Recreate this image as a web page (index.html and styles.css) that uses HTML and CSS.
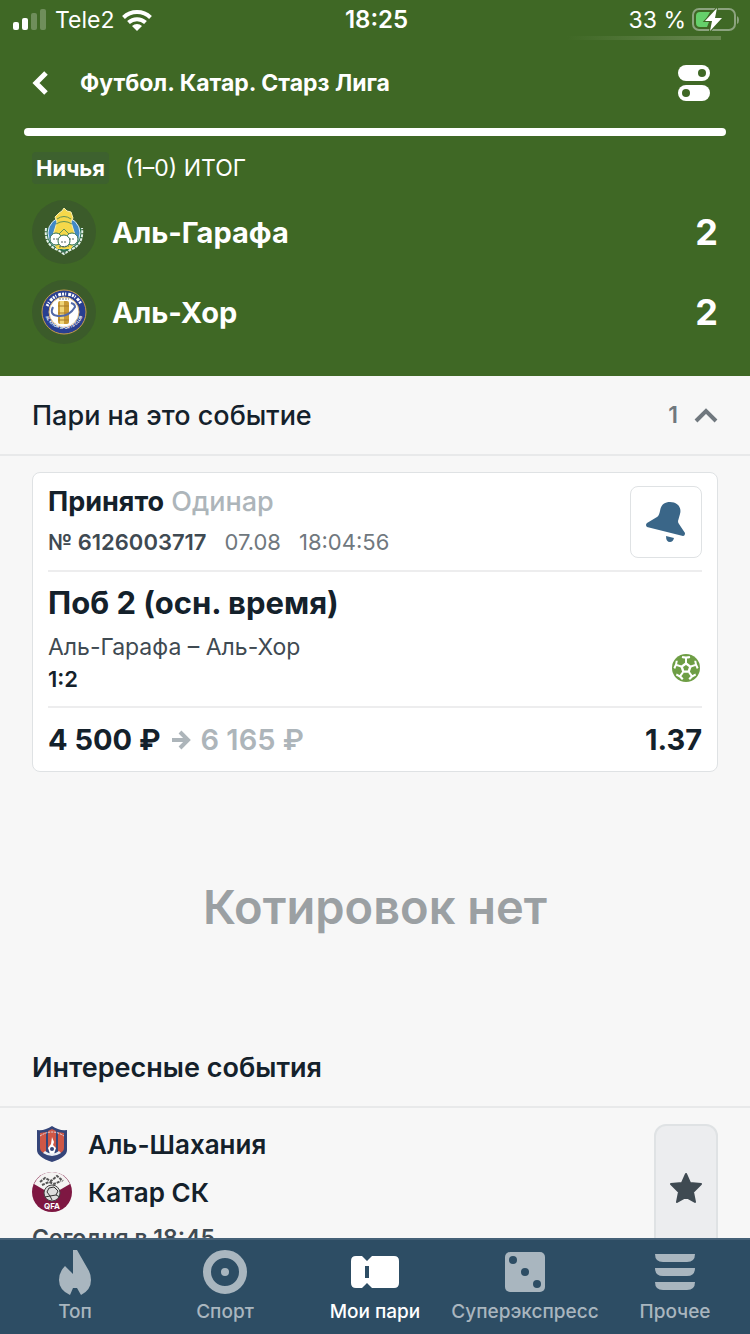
FILE: index.html
```html
<!DOCTYPE html>
<html lang="ru">
<head>
  <meta charset="UTF-8" />
  <meta name="viewport" content="width=device-width, initial-scale=1.0" />
  <title>Футбол. Катар. Старз Лига</title>
  <link rel="stylesheet" href="styles.css">
</head>
<body>

  <header class="match">
    <div class="status">
      <div class="status-left">
        <svg width="34" height="22" viewBox="0 0 34 22" fill="#fff">
          <rect x="0" y="13" width="6" height="8" rx="2" />
          <rect x="9" y="9" width="6" height="12" rx="2" />
          <rect x="18" y="4" width="6" height="17" rx="2" opacity=".25" />
          <rect x="27" y="0" width="6" height="21" rx="2" opacity=".25" />
        </svg>
        <span>Tele2</span>
        <svg width="30" height="22" viewBox="0 0 30 22" fill="none" stroke="#fff" stroke-width="4">
          <path d="M1.500 8.500a19.500 19.500 0 0 1 27 0" />
          <path d="M6.500 13.500a12.500 12.500 0 0 1 17 0" />
          <path d="M15 22l-5-5a7.500 7.500 0 0 1 10 0z" fill="#fff" stroke="none" />
        </svg>
      </div>
      <time class="clock">18:25</time>
      <div class="status-right">
        <span>33 %</span>
        <svg width="48" height="24" viewBox="0 0 48 24">
          <rect x="1" y="1" width="42" height="21" rx="6" fill="none" stroke="#8ca37f" stroke-width="2" />
          <path d="M45 8q2 1 2 4t-2 4z" fill="#8ca37f" />
          <path d="M8 4h10l-5 9 4 1-2 5H8q-4 0-4-4V8q0-4 4-4z" fill="#65d06a" />
          <path d="M25 0L13 13h7l-2 10L30 10h-7z" fill="#fff" stroke="#3f6825" stroke-width="2" paint-order="stroke" />
        </svg>
      </div>
      <div class="glow"></div>
    </div>

    <div class="titlebar">
      <button class="icon-btn back" aria-label="Назад">
        <svg width="18" height="24" viewBox="0 0 18 24" fill="none" stroke="#fff" stroke-width="5"><path d="M14 2L4 12l10 10" /></svg>
      </button>
      <h1>Футбол. Катар. Старз Лига</h1>
      <button class="icon-btn" aria-label="Настройки">
        <svg width="32" height="36" viewBox="0 0 32 36">
          <rect width="32" height="16" rx="8" fill="#fff" />
          <rect y="20" width="32" height="16" rx="8" fill="#fff" />
          <circle cx="24" cy="8" r="4" fill="#3f6825" />
          <circle cx="8" cy="28" r="4" fill="#3f6825" />
        </svg>
      </button>
    </div>
    <div class="progress"></div>

    <div class="result">
      <span class="tag">Ничья</span>
      <span>(1–0) ИТОГ</span>
    </div>

    <div class="team">
      <div class="logo">
        <svg width="40" height="48" viewBox="0 0 40 48">
          <path d="M2 20q-2 17 12 22l6 4 6-4q14-5 12-22" fill="#2f7350" stroke="#e4f1e9" stroke-width="2" stroke-dasharray="3 1" />
          <circle cx="20" cy="25" r="16" fill="#4189c7" stroke="#dcecf4" />
          <path d="M15 5l3-2 2-3 3 3 4 1 2 6-2 4 4 13-4 8H13l-4-8 4-13-2-5z" fill="#f5d84a" stroke="#f8eeb0" />
          <path d="M13 11q7-5 14 0M12 16q8-5 16 0M15 26l5-5 5 5" fill="none" stroke="#629254" />
          <path d="M9 34q11 7 22 0l-4 7H13z" fill="#f5d84a" />
          <g fill="#fff" stroke="#357353">
            <circle cx="12" cy="31" r="6" /><circle cx="28" cy="31" r="6" /><circle cx="20" cy="33" r="6" />
          </g>
          <path d="M9 31h6M17 34h6M25 31h6M15 39l10-1M17 44h6" stroke="#55655c" stroke-dasharray="2 1" />
        </svg>
      </div>
      <h2>Аль-Гарафа</h2>
      <b>2</b>
    </div>
    <div class="team">
      <div class="logo">
        <svg width="46" height="46" viewBox="0 0 46 46">
          <defs><path id="ring" d="M3 20a20 20 0 0 0 40 0" /></defs>
          <circle cx="23" cy="23" r="22" fill="#293f91" stroke="#c79c4e" />
          <circle cx="23" cy="23" r="15" fill="#fff" stroke="#d8b475" />
          <path d="M6 17q6-12 18-12 11 0 16 10" fill="none" stroke="#fff" stroke-width="3" stroke-dasharray="2 1 1 2 3 1" />
          <text class="crest-text"><textPath href="#ring" startOffset="50%">AL KHOR SPORTS CLUB</textPath></text>
          <rect x="17" y="12" width="11" height="23" rx="2" fill="#c99a34" />
          <rect x="19" y="12" width="4" height="23" fill="#f0d477" />
          <path d="M17 17h11M17 24h11M17 31h11" stroke="#a87b28" />
          <path d="M12 18q-4 8 5 9 11 1 17-9 0-3-4-4" fill="none" stroke="#5269a8" stroke-width="2" />
          <path d="M18 10h10" stroke="#777" stroke-dasharray="2 1" />
        </svg>
      </div>
      <h2>Аль-Хор</h2>
      <b>2</b>
    </div>
  </header>

  <main>
    <section>
      <button class="section-head" aria-expanded="true">
        <span class="section-title">Пари на это событие</span>
        <span class="count">1</span>
        <svg width="24" height="16" viewBox="0 0 24 16" fill="none" stroke="#70787e" stroke-width="4"><path d="M2 14L12 4l10 10" /></svg>
      </button>

      <article class="bet">
        <div class="bet-head">
          <div>
            <p class="bet-status"><b>Принято</b> Одинар</p>
            <p class="bet-info"><b>№ 6126003717</b><span>07.08</span><span>18:04:56</span></p>
          </div>
          <button class="bell" aria-label="Уведомления">
            <svg width="70" height="70" viewBox="1 1 70 70" fill="#3a6688">
              <path d="M17 37l10-6q2-1 3-6c1-7 5-9 10-9 7 0 12 5 10 12l-2 7q0 2 1 3l6 9q0 3-2 3L17 41q-2-2 0-4z" />
              <path d="M36 50l8 2q-1 4-4 4-4 0-4-6z" />
            </svg>
          </button>
        </div>
        <div class="bet-body">
          <div>
            <h3>Поб 2 (осн. время)</h3>
            <p class="bet-teams">Аль-Гарафа – Аль-Хор</p>
            <p class="bet-score">1:2</p>
          </div>
          <svg class="ball" width="30" height="30" viewBox="0 0 30 30">
            <circle cx="15" cy="15" r="14" fill="#6e9e45" />
            <g fill="none" stroke="#fff" stroke-width="2">
              <path id="seam" d="M15 10V4M11 4q4 1 8 0" />
              <use href="#seam" transform="rotate(72 15 15)" />
              <use href="#seam" transform="rotate(144 15 15)" />
              <use href="#seam" transform="rotate(216 15 15)" />
              <use href="#seam" transform="rotate(288 15 15)" />
              <path d="M15 10.500l4.300 3.100-1.600 5h-5.400l-1.600-5z" stroke-width="2.400" />
            </g>
          </svg>
        </div>
        <div class="bet-foot">
          <p><b>4 500 ₽</b>
            <svg width="20" height="20" viewBox="0 0 20 20" fill="none" stroke="#adb5ba" stroke-width="4"><path d="M1 10h15M9 2l8 8-8 8" /></svg>
            6 165 ₽</p>
          <b>1.37</b>
        </div>
      </article>
    </section>

    <p class="empty">Котировок нет</p>

    <section>
      <h2 class="interesting">Интересные события</h2>
      <div class="event">
        <div class="event-info">
          <div class="event-team">
            <svg width="40" height="40" viewBox="0 0 40 40">
              <path d="M5 6q8 1 15-4 7 5 15 4v20q0 7-15 12Q5 33 5 26z" fill="#354579" />
              <path d="M8 9l6-1v22q-6-2-6-6zM26 8l6 1v15q0 4-6 6zM16 7l4-2 4 2v18h-8z" fill="#ce5746" />
              <path d="M8 12q12-8 24 0" fill="none" stroke="#dfe0e9" stroke-dasharray="2 1" />
              <path d="M20 13l2 5-1 3 3 3-2 6h-4l-2-6 3-4z" fill="#fff" />
              <circle cx="20" cy="25" r="2" fill="#354579" />
              <path d="M13 27q7 5 14 0l2 2q-9 6-18 0z" fill="#e9edf3" />
            </svg>
            <h3>Аль-Шахания</h3>
          </div>
          <div class="event-team">
            <svg width="40" height="40" viewBox="0 0 40 40">
              <circle cx="20" cy="20" r="20" fill="#7e1742" />
              <path d="M2 12Q8 0 20 0t18 12l-12 7H14z" fill="#f4f3f2" />
              <path d="M8 10l5-4 6 3 6-5 6 5M10 13l7-3 5 2 7-3" fill="none" stroke="#555" stroke-width="2" stroke-dasharray="3 1" />
              <circle cx="20" cy="21" r="8" fill="#ddd" stroke="#444" />
              <path d="M17 16l5-1 4 4-2 4-6 1-3-4zM13 25l5-1 2 4M24 23l4 2" fill="none" stroke="#333" stroke-width="1" />
              <text x="20" y="37" class="qfa">QFA</text>
            </svg>
            <h3>Катар СК</h3>
          </div>
          <p class="event-time">Сегодня в 18:45</p>
        </div>
        <button class="fav" aria-label="В избранное">
          <svg width="34" height="34" viewBox="0 0 34 34"><path d="M17 3l4 9 11 1-8 8 2 10-9-5-9 5 2-10-8-8 11-1z" fill="#3f4a52" stroke="#3f4a52" stroke-width="2" stroke-linejoin="round" /></svg>
        </button>
      </div>
    </section>
  </main>

  <nav class="tabs">
    <a href="#">
      <svg width="48" height="48" viewBox="0 0 48 48" fill="currentColor"><path d="M22 2h4l12 21q2 4 2 9 0 10-10 15l-4-7h-4l-3 7Q8 42 8 32q0-8 6-14l8 8z" /></svg>
      <span>Топ</span>
    </a>
    <a href="#">
      <svg width="48" height="48" viewBox="0 0 48 48"><circle cx="24" cy="24" r="18" fill="none" stroke="currentColor" stroke-width="8" /><circle cx="24" cy="24" r="4" fill="currentColor" /></svg>
      <span>Спорт</span>
    </a>
    <a href="#" class="active">
      <svg width="48" height="48" viewBox="0 0 48 48" fill="currentColor"><path fill-rule="evenodd" d="M5 8h6l5 5 5-5h22q5 0 5 5v22q0 5-5 5H21l-5-5-5 5H5q-5 0-5-5V13q0-5 5-5zM14 18v12h4V18z" /></svg>
      <span>Мои пари</span>
    </a>
    <a href="#">
      <svg width="48" height="48" viewBox="0 0 48 48"><rect x="4" y="4" width="40" height="40" rx="5" fill="currentColor" /><g fill="#2d4d64"><circle cx="12" cy="12" r="4" /><circle cx="24" cy="24" r="4" /><circle cx="36" cy="36" r="4" /></g></svg>
      <span>Суперэкспресс</span>
    </a>
    <a href="#">
      <svg width="48" height="48" viewBox="0 0 48 48" fill="currentColor"><path d="M4 6h40q0 8-8 8H12q-8 0-8-8zM4 20h40q0 8-8 8H12q-8 0-8-8zM4 34h40q0 8-8 8H12q-8 0-8-8z" /></svg>
      <span>Прочее</span>
    </a>
  </nav>

</body>
</html>
```

FILE: styles.css
```css
* {
  box-sizing: border-box;
}

body {
  margin: 0;
  height: 100vh;
  display: flex;
  flex-direction: column;
  font-family: Inter, "Open Sans", sans-serif;
  font-size: 23px;
  color: #14212b;
  background: #f7f7f7;
}

h1, h2, h3, p {
  margin: 0;
}

b, h1, h2, h3 {
  font-weight: 700;
}

button {
  padding: 0;
  border: none;
  background: none;
  color: inherit;
  font: inherit;
  cursor: pointer;
}

svg {
  display: block;
  flex: none;
}

/* header */

.match {
  flex: none;
  padding-bottom: 16px;
  color: #fff;
  background: #3f6825;
}

.status {
  position: relative;
  display: grid;
  grid-template-columns: 1fr auto 1fr;
  align-items: center;
  height: 40px;
  padding: 0 10px 0 13px;
  line-height: 40px;
}

.status-left, .status-right {
  display: flex;
  align-items: center;
  gap: 8px;
}

.status-right {
  justify-content: flex-end;
  gap: 6px;
}

.clock {
  font-size: 24px;
  font-weight: 600;
}

.glow {
  position: absolute;
  right: 29px;
  bottom: 0;
  width: 154px;
  height: 4px;
  background: linear-gradient(to right, #3f6825, #688750);
}

.titlebar {
  display: flex;
  align-items: center;
  height: 88px;
  padding: 0 40px 2px 32px;
}

.titlebar h1 {
  flex: 1;
  font-size: 23px;
}

.back {
  width: 48px;
}

.progress {
  height: 8px;
  margin: 0 24px 16px;
  border-radius: 4px;
  background: #fff;
}

.result {
  display: flex;
  gap: 16px;
  padding: 0 32px;
  margin-bottom: 16px;
  line-height: 32px;
}

.tag {
  padding: 0 4px;
  border-radius: 4px;
  background: #3d612e;
  font-size: 22px;
  font-weight: 700;
}

.team {
  display: flex;
  align-items: center;
  gap: 16px;
  padding: 0 32px;
  margin-bottom: 16px;
}

.team h2 {
  flex: 1;
  font-size: 29px;
}

.team b {
  font-size: 36px;
}

.logo {
  display: flex;
  align-items: center;
  justify-content: center;
  width: 64px;
  height: 64px;
  border-radius: 50%;
  background: #3b5b2a;
}

.crest-text {
  fill: #fff;
  font-size: 4px;
  font-weight: 700;
  text-anchor: middle;
}

/* content */

main {
  flex: 1;
  min-height: 0;
  overflow-y: auto;
  scrollbar-width: none;
}

.section-head {
  display: flex;
  align-items: center;
  width: 100%;
  height: 80px;
  padding: 0 32px;
  border-bottom: 2px solid #e8e9ea;
  text-align: left;
}

.section-title {
  flex: 1;
  font-size: 27px;
  font-weight: 500;
}

.count {
  margin-right: 16px;
  color: #70787e;
  font-weight: 600;
}

.bet {
  margin: 16px 32px 0;
  padding: 0 15px;
  border: 1px solid #dfe2e4;
  border-radius: 8px;
  background: #fff;
}

.bet-head {
  display: flex;
  align-items: center;
  justify-content: space-between;
  height: 99px;
  border-bottom: 2px solid #ededee;
}

.bet-status {
  color: #adb5ba;
  font-size: 27px;
  font-weight: 500;
  line-height: 40px;
}

.bet-status b {
  color: #14212b;
}

.bet-info {
  display: flex;
  gap: 18px;
  color: #70787e;
  font-size: 22px;
  line-height: 40px;
}

.bet-info b {
  color: #3f4a52;
  font-weight: 600;
}

.bell {
  width: 72px;
  height: 72px;
  border: 1px solid #dfe2e4;
  border-radius: 8px;
}

.bet-body {
  display: flex;
  align-items: flex-end;
  justify-content: space-between;
  height: 136px;
  padding-bottom: 11px;
  border-bottom: 2px solid #ededee;
}

.bet-body h3 {
  margin-bottom: 8px;
  font-size: 31px;
  line-height: 40px;
}

.bet-teams {
  color: #3f4a52;
  line-height: 32px;
}

.bet-score {
  font-size: 22px;
  font-weight: 600;
  line-height: 32px;
}

.ball {
  margin: 0 1px 12px 0;
}

.bet-foot {
  display: flex;
  align-items: center;
  justify-content: space-between;
  height: 63px;
  font-size: 29px;
}

.bet-foot p {
  display: flex;
  align-items: center;
  gap: 10px;
  color: #adb5ba;
  font-weight: 600;
}

.bet-foot p b {
  color: #14212b;
}

.empty {
  padding: 95px 0 96px;
  color: #9ba0a3;
  font-size: 47px;
  font-weight: 600;
  line-height: 80px;
  text-align: center;
}

.interesting {
  padding: 0 32px 14px;
  border-bottom: 2px solid #e8e9ea;
  font-size: 27px;
  font-weight: 600;
  line-height: 49px;
}

.event {
  display: flex;
  justify-content: space-between;
  padding: 16px 32px;
}

.event-team {
  display: flex;
  align-items: center;
  gap: 16px;
  height: 40px;
  margin-bottom: 8px;
}

.event-team h3 {
  font-size: 26px;
  font-weight: 600;
}

.event-time {
  color: #3f4a52;
  font-weight: 600;
  line-height: 36px;
}

.qfa {
  fill: #fff;
  font-size: 8px;
  font-weight: 700;
  text-anchor: middle;
}

.fav {
  display: flex;
  align-items: center;
  justify-content: center;
  width: 64px;
  height: 128px;
  border: 2px solid #dfe2e4;
  border-radius: 12px;
  background: #ecedef;
}

/* bottom tabs */

.tabs {
  flex: none;
  display: grid;
  grid-template-columns: repeat(5, 1fr);
  height: 96px;
  padding-top: 8px;
  border-top: 2px solid #456178;
  background: #2d4d64;
}

.tabs a {
  display: flex;
  flex-direction: column;
  align-items: center;
  color: #a9b6bf;
  font-size: 19px;
  font-weight: 500;
  line-height: 32px;
  text-decoration: none;
  white-space: nowrap;
}

.tabs .active {
  color: #fff;
}
```
